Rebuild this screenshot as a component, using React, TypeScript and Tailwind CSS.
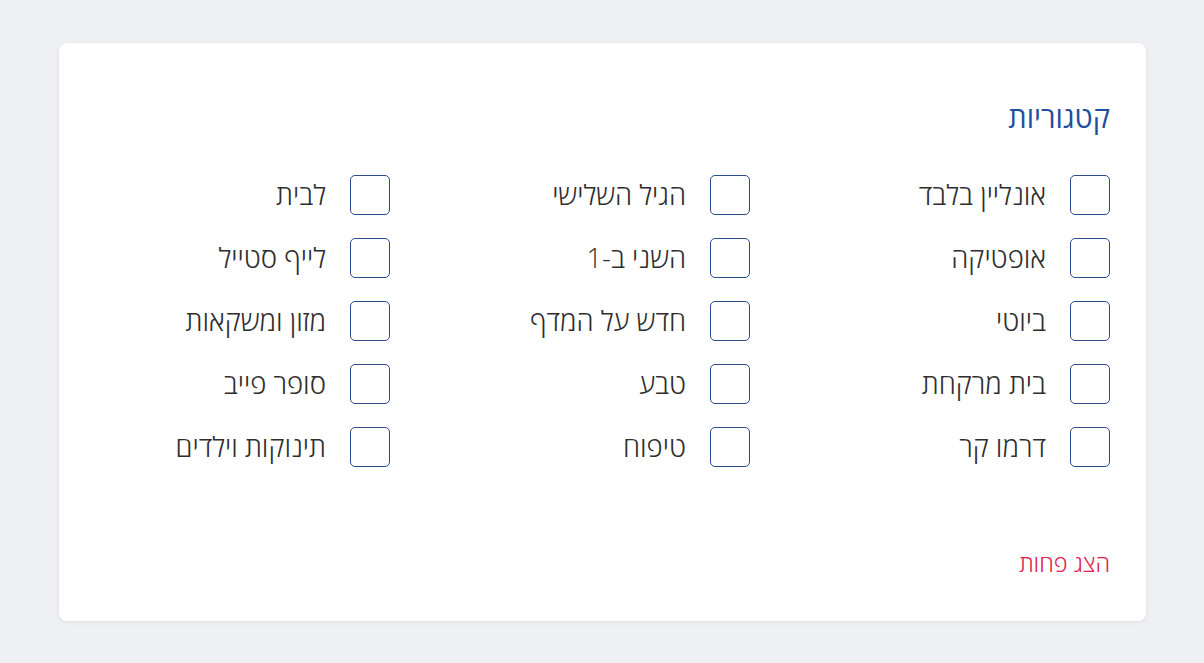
import React from 'react';

const categories = [
  'אונליין בלבד',
  'הגיל השלישי',
  'לבית',
  'אופטיקה',
  'השני ב-1',
  'לייף סטייל',
  'ביוטי',
  'חדש על המדף',
  'מזון ומשקאות',
  'בית מרקחת',
  'טבע',
  'סופר פייב',
  'דרמו קר',
  'טיפוח',
  'תינוקות וילדים',
];

const App: React.FC = () => {
  return (
    <div
      dir="rtl"
      className="min-h-screen bg-[#eef0f4] px-[58px] py-[43px]"
      style={{ fontFamily: '"Open Sans", "DejaVu Sans", sans-serif' }}
    >
      <div className="bg-white rounded-lg shadow-[0_1px_4px_rgba(0,0,0,0.08)] px-9 pt-[52px] pb-[42px] w-[1087px]">
        <h2 className="text-[29px] leading-[44px] text-[#1f4f9e] mb-[36px]">קטגוריות</h2>

        <div className="grid grid-cols-3 gap-x-[65px] gap-y-[23px]">
          {categories.map((name) => (
            <label key={name} className="flex items-center gap-[24px] cursor-pointer">
              <span className="w-[40px] h-[40px] shrink-0 rounded-[5px] border-[1.75px] border-[#2d4a8c] bg-white" />
              <span className="text-[27.5px] font-light leading-[40px] text-[#2e2e2e]">{name}</span>
            </label>
          ))}
        </div>

        <button className="mt-[80px] text-[23.5px] font-light leading-[32px] text-[#e0234e]">הצג פחות</button>
      </div>
    </div>
  );
};

export default App;
